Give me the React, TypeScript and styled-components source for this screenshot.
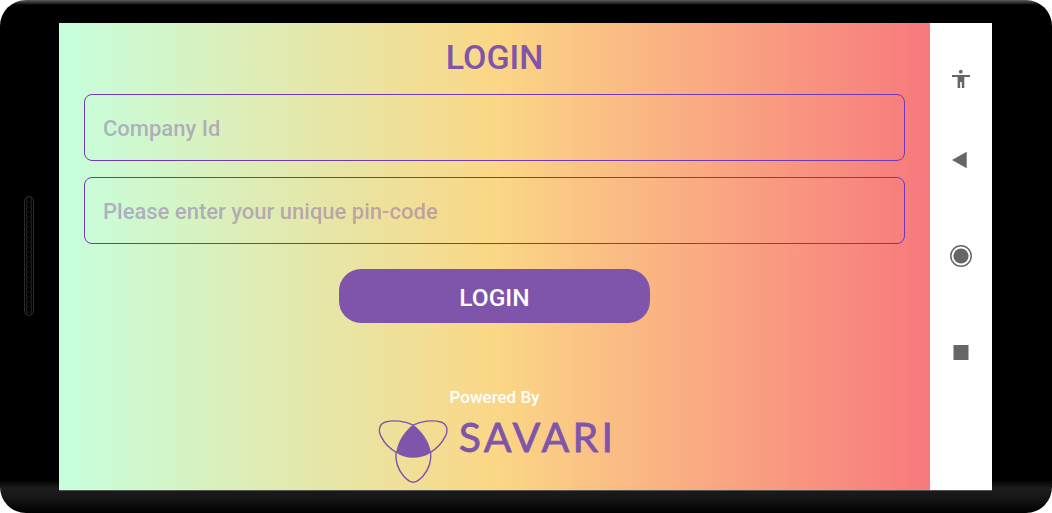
import styled, { createGlobalStyle } from "styled-components";

const Global = createGlobalStyle`
  html, body {
    margin: 0;
    padding: 0;
    background: #fff;
    font-family: Roboto, "Liberation Sans", sans-serif;
  }
`;

const App = () => {
  return (
    <>
      <Global />
      <Phone>
        <Speaker />
        <Screen>
          <Login>
            <Title>LOGIN</Title>
            <Field placeholder="Company Id" />
            <Field placeholder="Please enter your unique pin-code" />
            <SubmitButton type="button">LOGIN</SubmitButton>
            <Footer>
              <Powered>Powered By</Powered>
              <Brand>
                <LogoMark />
                <BrandName>SAVARI</BrandName>
              </Brand>
            </Footer>
          </Login>
          <SideNav>
            <NavItem $top={44}>
              <svg width="24" height="24" viewBox="0 0 24 24" fill="#666">
                <circle cx="11.8" cy="4.7" r="1.9" />
                <path d="M3 8h18v1.9h-5.7V21h-2.5v-6h-1.7v6H8.600V9.900H3z" />
              </svg>
            </NavItem>
            <NavItem $top={57}>
              <svg width="24" height="24" viewBox="0 0 24 24" fill="#666">
                <path d="M17.700 3.700v16.600L3 12z" />
              </svg>
            </NavItem>
            <NavItem $top={72}>
              <svg width="24" height="24" viewBox="0 0 24 24">
                <circle cx="12" cy="12" r="10.200" fill="none" stroke="#666" strokeWidth="1.500" />
                <circle cx="12" cy="12" r="7.600" fill="#666" />
              </svg>
            </NavItem>
            <NavItem $top={72}>
              <svg width="24" height="24" viewBox="0 0 24 24" fill="#666">
                <rect x="4.500" y="5" width="15" height="15" />
              </svg>
            </NavItem>
          </SideNav>
        </Screen>
      </Phone>
    </>
  );
};

const LogoMark = () => (
  <LogoSvg viewBox="50 115 215 200">
    <g fill="none" stroke="#7f55ab" strokeWidth="4.200">
      <path d="M158 136C135 124 100 120 75 127C58 132 52 150 62 170C72 190 90 208 108 218" />
      <path d="M158 136C181 124 216 120 241 127C258 132 264 150 254 170C244 190 226 208 209 218" />
      <path d="M107 215C104 240 112 268 130 289C140 300 150 307 158 307C166 307 177 300 187 289C205 268 213 240 210 215" />
    </g>
    <path
      d="M158 135C137 150 113 180 107 218C122 229 140 234 158 234C176 234 196 229 211 218C205 180 179 150 158 135Z"
      fill="#7f55ab"
    />
  </LogoSvg>
);

const Phone = styled.div`
  position: relative;
  box-sizing: border-box;
  width: 1052px;
  height: 513px;
  padding: 23px 60px 23px 59px;
  overflow: hidden;
  border-radius: 26px;
  background: linear-gradient(
    to bottom,
    #5a5a5a 0,
    #2a2a2a 3px,
    #000 5px,
    #000 480px,
    #1c1c1c 488px,
    #161616 498px,
    #000 513px
  );
`;

const Speaker = styled.div`
  position: absolute;
  left: 24px;
  top: 196px;
  box-sizing: border-box;
  width: 10px;
  height: 120px;
  border: 1px solid #2c2c2c;
  border-radius: 5px;
  background: radial-gradient(circle at 50% 50%, #000 0, #000 2px, #2a2a2a 2.800px, #000 3.500px);
  background-size: 100% 5px;
`;

const Screen = styled.div`
  display: flex;
  height: 467px;
  box-shadow: 0 1px 0 rgba(255, 255, 255, 0.25);
`;

const Login = styled.main`
  flex: 1;
  display: flex;
  flex-direction: column;
  align-items: center;
  box-sizing: border-box;
  padding: 14px 25px 0;
  background: linear-gradient(to right, #c6ffdd 0%, #fbd786 50%, #f7797d 100%);
`;

const Title = styled.h1`
  margin: 0 0 17px;
  height: 40px;
  font-size: 34px;
  line-height: 40px;
  font-weight: 500;
  color: #7f55ab;
`;

const Field = styled.input`
  box-sizing: border-box;
  width: 100%;
  height: 67px;
  margin-bottom: 16px;
  padding: 2px 18px 0;
  border: 1px solid #7139b8;
  border-radius: 8px;
  background: transparent;
  outline: none;
  font-family: Roboto, sans-serif;
  font-size: 22px;
  font-weight: 500;

  &::placeholder {
    color: rgba(127, 85, 171, 0.45);
    opacity: 1;
  }
`;

const SubmitButton = styled.button`
  width: 311px;
  height: 54px;
  margin-top: 9px;
  padding: 3px 0 0;
  border: none;
  border-radius: 22px;
  background: #7f55ab;
  color: #fff;
  font-family: Roboto, sans-serif;
  font-size: 24.500px;
  font-weight: 500;
`;

const Footer = styled.footer`
  display: flex;
  flex-direction: column;
  align-items: center;
  margin-top: 64px;
`;

const Powered = styled.div`
  height: 20px;
  font-size: 17px;
  line-height: 20px;
  font-weight: 500;
  color: #fff;
`;

const Brand = styled.div`
  display: flex;
  align-items: flex-start;
  gap: 10px;
  margin-top: 11px;
  margin-left: 4px;
`;

const LogoSvg = styled.svg`
  width: 72px;
  height: 67px;
`;

const BrandName = styled.div`
  font-family: Lato, sans-serif;
  font-size: 41px;
  line-height: 38px;
  font-weight: 400;
  letter-spacing: 3.300px;
  color: #7f55ab;
  -webkit-text-stroke: 0.8px #7f55ab;
`;

const SideNav = styled.nav`
  flex: none;
  display: flex;
  flex-direction: column;
  align-items: center;
  width: 62px;
  background: #fff;
`;

const NavItem = styled.div<{ $top: number }>`
  width: 24px;
  height: 24px;
  margin-top: ${(p) => p.$top}px;
`;

export default App;
